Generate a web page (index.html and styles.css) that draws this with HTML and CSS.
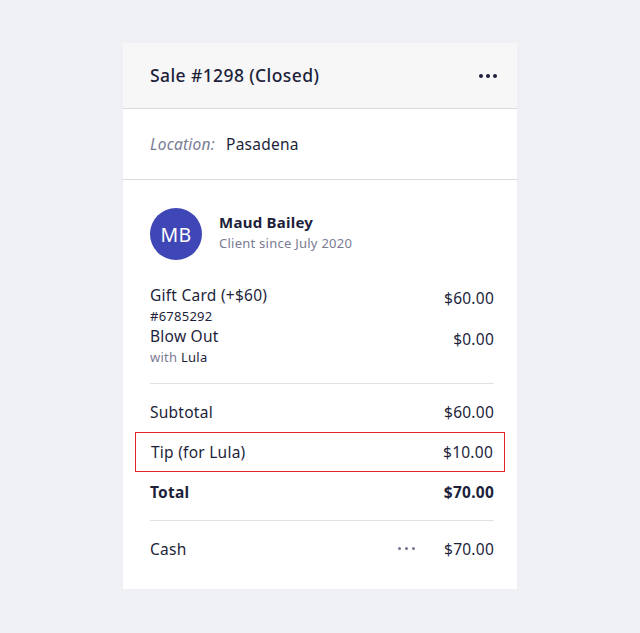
FILE: index.html
```html
<!DOCTYPE html>
<html lang="en">
<head>
	<meta charset="UTF-8">
	<title>Sale #1298</title>
	<link rel="stylesheet" href="styles.css">
</head>
<body>

<div class="sale-card">
	<div class="sale-header">
		<h1>Sale #1298 (Closed)</h1>
		<span class="dots dark"><i></i><i></i><i></i></span>
	</div>

	<div class="location">
		<span class="location-label">Location:</span>
		<span>Pasadena</span>
	</div>

	<div class="sale-body">
		<div class="client">
			<div class="avatar">MB</div>
			<div>
				<div class="client-name">Maud Bailey</div>
				<div class="client-since">Client since July 2020</div>
			</div>
		</div>

		<div class="items">
			<div class="item">
				<div>
					<div class="item-name">Gift Card (+$60)</div>
					<div class="item-sub">#6785292</div>
				</div>
				<div class="price">$60.00</div>
			</div>
			<div class="item">
				<div>
					<div class="item-name">Blow Out</div>
					<div class="item-sub"><span class="muted">with</span> Lula</div>
				</div>
				<div class="price">$0.00</div>
			</div>
		</div>

		<div class="totals">
			<div class="row"><span>Subtotal</span><span>$60.00</span></div>
			<div class="row tip"><span>Tip (for Lula)</span><span>$10.00</span></div>
			<div class="row total"><span>Total</span><span>$70.00</span></div>
		</div>

		<div class="payment">
			<span>Cash</span>
			<span class="dots light"><i></i><i></i><i></i></span>
			<span>$70.00</span>
		</div>
	</div>
</div>

</body>
</html>
```

FILE: styles.css
```css
body {
	background-color: #eff0f4;
	color: #1d1f3b;
	font-family: "Noto Sans", Arial, sans-serif;
	letter-spacing: 0.25px;
	margin: 0;
}
.sale-card {
	width: 394px;
	margin: 43px 0 0 123px;
	background-color: white;
	padding-bottom: 13px;
}
.sale-header {
	background-color: #f7f7f7;
	border-bottom: 1px solid #dcdcdf;
	height: 65px;
	padding: 0 20px 0 27px;
	display: flex;
	align-items: center;
	justify-content: space-between;
}
.sale-header h1 {
	font-size: 17.5px;
	font-weight: 500;
	letter-spacing: 0.4px;
	margin: -2px 0 0;
}
.dots {
	display: flex;
	gap: 3px;
}
.dots i {
	width: 4px;
	height: 4px;
	border-radius: 50%;
	background-color: #1d1f3b;
}
.dots.light {
	gap: 3.5px;
}
.dots.light i {
	width: 3.5px;
	height: 3.5px;
	background-color: #74758f;
}
.location {
	height: 70px;
	border-bottom: 1px solid #dcdcdf;
	padding-left: 27px;
	display: flex;
	align-items: center;
	gap: 11px;
	font-size: 15.5px;
}
.location-label {
	color: #7a7b93;
	font-style: italic;
}
.sale-body {
	padding: 28px 23px 0 27px;
}
.client {
	display: flex;
	align-items: center;
	gap: 17px;
}
.avatar {
	width: 52px;
	height: 52px;
	border-radius: 50%;
	background-color: #3f47b7;
	color: white;
	font-size: 19.5px;
	display: flex;
	align-items: center;
	justify-content: center;
}
.client-name {
	font-size: 15px;
	font-weight: 700;
	margin-top: -4px;
}
.client-since {
	font-size: 13px;
	color: #7a7b93;
	margin-top: 2px;
}
.items {
	padding-top: 25px;
	padding-bottom: 16px;
	border-bottom: 1px solid #e1e1e5;
}
.item {
	display: flex;
	justify-content: space-between;
	align-items: flex-start;
}
.item-name {
	font-size: 15.5px;
	line-height: 20px;
}
.price {
	font-size: 15.5px;
	line-height: 20px;
	padding-top: 3px;
}
.item-sub {
	font-size: 13px;
	line-height: 20px;
	margin-top: 1px;
}
.muted {
	color: #7a7b93;
}
.totals {
	padding: 8px 0 8px;
	border-bottom: 1px solid #e1e1e5;
}
.row {
	display: flex;
	justify-content: space-between;
	font-size: 15.5px;
	height: 40px;
	align-items: center;
}
.row.tip {
	margin: 0 -11px 0 -15px;
	padding: 0 11px 0 15px;
	border: 1.5px solid #e5232a;
	box-sizing: border-box;
}
.row.total {
	font-weight: 700;
}
.payment {
	display: flex;
	align-items: center;
	height: 55px;
	font-size: 15.5px;
}
.payment span:first-child {
	flex: 1;
}
.payment .dots {
	margin-right: 29px;
}
```
